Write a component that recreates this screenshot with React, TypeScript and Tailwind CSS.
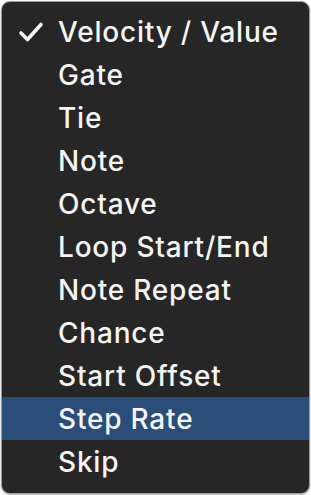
import React from "react";

const items = [
  "Velocity / Value",
  "Gate",
  "Tie",
  "Note",
  "Octave",
  "Loop Start/End",
  "Note Repeat",
  "Chance",
  "Start Offset",
  "Step Rate",
  "Skip",
];

export default function App() {
  const selected = 0;
  const hovered = 9;

  return (
    <div className="w-[311px] h-[495px] bg-white p-[1px]">
      <div className="h-full rounded-[9px] border border-[#9c9c9c] bg-[#262626] pt-[8px] pb-[7px] shadow-[0_1px_2px_rgba(0,0,0,0.3)] font-['Inter','Liberation_Sans',sans-serif] text-[#f4f4f4]">
        {items.map((label, i) => (
          <div
            key={label}
            className={`flex h-[43px] items-center ${i === hovered ? "bg-[#2a4e77]" : ""}`}
          >
            <div className="flex w-[56px] items-center pl-[16px]">
              {i === selected && (
                <svg width="26" height="22" viewBox="0 0 26 22" fill="none">
                  <path d="M3 12 L9.5 18.5 L23 3.5" stroke="#f4f4f4" strokeWidth="3.6" strokeLinecap="round" strokeLinejoin="round" />
                </svg>
              )}
            </div>
            <span className="text-[28px] font-medium leading-none tracking-[0.8px]">{label}</span>
          </div>
        ))}
      </div>
    </div>
  );
}
